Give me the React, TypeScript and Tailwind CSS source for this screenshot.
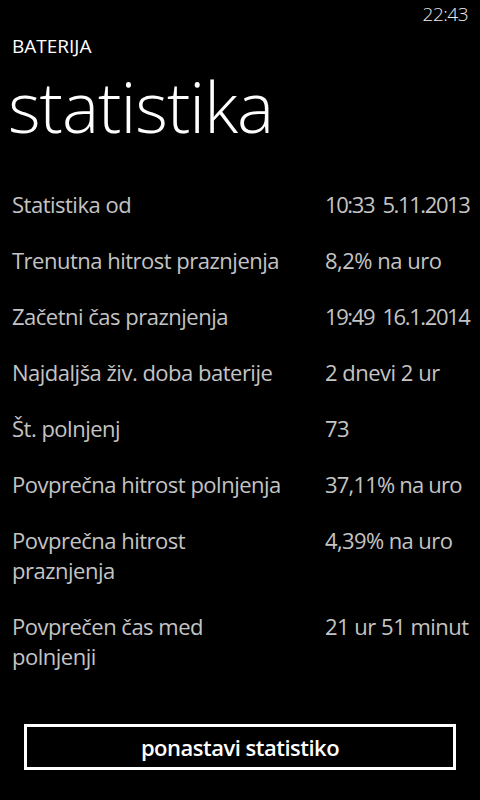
import React from "react";

const rows: { label: string; value: string; vc: string }[] = [
  { label: "Statistika od", value: "10:33 5.11.2013", vc: "tracking-[-1.4px] [word-spacing:4px]" },
  { label: "Trenutna hitrost praznjenja", value: "8,2% na uro", vc: "tracking-[-0.5px]" },
  { label: "Začetni čas praznjenja", value: "19:49 16.1.2014", vc: "tracking-[-1.4px] [word-spacing:4px]" },
  { label: "Najdaljša živ. doba baterije", value: "2 dnevi 2 ur", vc: "tracking-[-0.5px]" },
  { label: "Št. polnjenj", value: "73", vc: "tracking-[-0.5px]" },
  { label: "Povprečna hitrost polnjenja", value: "37,11% na uro", vc: "tracking-[-0.8px]" },
  { label: "Povprečna hitrost praznjenja", value: "4,39% na uro", vc: "tracking-[-0.6px]" },
  { label: "Povprečen čas med polnjenji", value: "21 ur 51 minut", vc: "tracking-[-0.5px]" },
];

export default function App() {
  return (
    <div
      className="w-[480px] h-[800px] bg-black text-white flex flex-col overflow-hidden"
      style={{ fontFamily: '"Open Sans", "Noto Sans", sans-serif' }}
    >
      <div className="h-[32px] flex items-start justify-end pr-[12px] pt-[4px] text-[19px] leading-[20px] tracking-[-0.5px] font-light text-[#ececec]">
        22:43
      </div>
      <div className="pl-[12px] mt-[2px] text-[19px] leading-[24px] text-white">BATERIJA</div>
      <div className="pl-[8px] mt-[13px] text-[70px] leading-[70px] font-light tracking-[-1px] text-white">
        statistika
      </div>
      <div className="mt-[48px] flex flex-col gap-[26px] pl-[12px] pr-[12px]">
        {rows.map((r) => (
          <div
            key={r.label}
            className="grid grid-cols-[313px_1fr] text-[22px] leading-[30px] text-[#c4c4c4]"
          >
            <div className="pr-[37px] tracking-[-0.5px]">{r.label}</div>
            <div className={"whitespace-nowrap " + r.vc}>{r.value}</div>
          </div>
        ))}
      </div>
      <div className="flex-1" />
      <div className="px-[24px] pb-[30px]">
        <button className="w-full h-[46px] border-[3px] border-white text-[22px] tracking-[-0.5px] font-semibold text-white leading-none flex items-center justify-center">
          ponastavi statistiko
        </button>
      </div>
    </div>
  );
}
